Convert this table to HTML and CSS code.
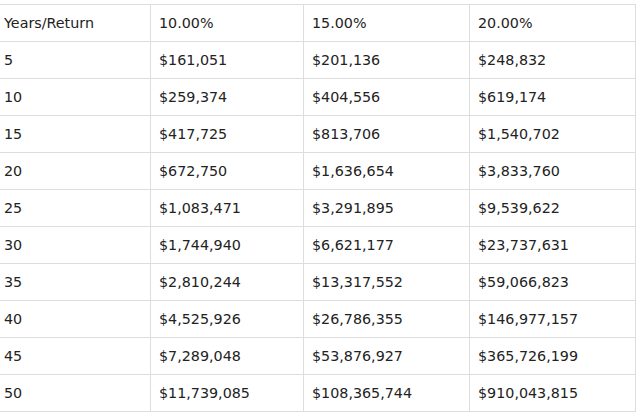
FILE: index.html
```html
<!DOCTYPE html>
<html lang="en">
<head>
<meta charset="utf-8">
<title>Returns</title>
<link rel="stylesheet" href="styles.css">
</head>
<body>
<table class="returns">
  <thead>
    <tr>
      <th class="c1">Years/Return</th>
      <th class="c2">10.00%</th>
      <th class="c3">15.00%</th>
      <th class="c4">20.00%</th>
    </tr>
  </thead>
  <tbody>
    <tr><td>5</td><td>$161,051</td><td>$201,136</td><td>$248,832</td></tr>
    <tr><td>10</td><td>$259,374</td><td>$404,556</td><td>$619,174</td></tr>
    <tr><td>15</td><td>$417,725</td><td>$813,706</td><td>$1,540,702</td></tr>
    <tr><td>20</td><td>$672,750</td><td>$1,636,654</td><td>$3,833,760</td></tr>
    <tr><td>25</td><td>$1,083,471</td><td>$3,291,895</td><td>$9,539,622</td></tr>
    <tr><td>30</td><td>$1,744,940</td><td>$6,621,177</td><td>$23,737,631</td></tr>
    <tr><td>35</td><td>$2,810,244</td><td>$13,317,552</td><td>$59,066,823</td></tr>
    <tr><td>40</td><td>$4,525,926</td><td>$26,786,355</td><td>$146,977,157</td></tr>
    <tr><td>45</td><td>$7,289,048</td><td>$53,876,927</td><td>$365,726,199</td></tr>
    <tr><td>50</td><td>$11,739,085</td><td>$108,365,744</td><td>$910,043,815</td></tr>
  </tbody>
</table>
</body>
</html>
```
FILE: styles.css
```css
html, body {
  margin: 0;
  padding: 0;
  background: #ffffff;
}

body {
  font-family: "DejaVu Sans", Verdana, sans-serif;
  font-size: 14.3px;
  color: #222222;
  overflow: hidden;
}

.returns {
  margin: 4px 0 0 -5px;
  border-collapse: separate;
  border-spacing: 0;
  table-layout: fixed;
  width: 641px;
  border-top: 1px solid #dddddd;
  border-left: 1px solid #dddddd;
}

.returns th,
.returns td {
  box-sizing: border-box;
  padding: 10px 8px;
  line-height: 16px;
  height: 37px;
  font-weight: normal;
  text-align: left;
  white-space: nowrap;
  border-right: 1px solid #dddddd;
  border-bottom: 1px solid #dddddd;
}

.returns .c1 { width: 155px; }
.returns .c2 { width: 153px; }
.returns .c3 { width: 166px; }
.returns .c4 { width: 166px; }
```
